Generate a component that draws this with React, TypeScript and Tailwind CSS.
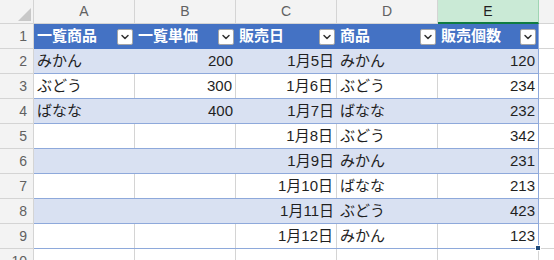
import { ChevronDown } from 'lucide-react';

type Row = { a: string; b: string; c: string; d: string; e: string };

const rows: Row[] = [
  { a: 'みかん', b: '200', c: '1月5日', d: 'みかん', e: '120' },
  { a: 'ぶどう', b: '300', c: '1月6日', d: 'ぶどう', e: '234' },
  { a: 'ばなな', b: '400', c: '1月7日', d: 'ばなな', e: '232' },
  { a: '', b: '', c: '1月8日', d: 'ぶどう', e: '342' },
  { a: '', b: '', c: '1月9日', d: 'みかん', e: '231' },
  { a: '', b: '', c: '1月10日', d: 'ばなな', e: '213' },
  { a: '', b: '', c: '1月11日', d: 'ぶどう', e: '423' },
  { a: '', b: '', c: '1月12日', d: 'みかん', e: '123' },
];

const headers = ['一覧商品', '一覧単価', '販売日', '商品', '販売個数'];
const letters = ['A', 'B', 'C', 'D', 'E'];

function FilterButton() {
  return (
    <div className="w-4 h-4 bg-white border border-[#a6a6a6] rounded-[2px] flex items-center justify-center shrink-0">
      <ChevronDown className="w-3 h-3 text-[#333]" strokeWidth={3} />
    </div>
  );
}

export default function App() {
  return (
    <div
      className="w-[554px] h-[260px] overflow-hidden bg-white text-[15px] text-[#1f1f1f]"
      style={{ fontFamily: '"Liberation Sans", "Noto Sans CJK JP", sans-serif' }}
    >
      {/* column letters */}
      <div className="flex h-6">
        <div className="w-[34px] shrink-0 bg-[#f3f3f3] border-r border-b border-[#d4d4d4] relative">
          <div className="absolute right-[2px] bottom-[2px] w-0 h-0 border-l-[13px] border-l-transparent border-b-[13px] border-b-[#c8c8c8]" />
        </div>
        {letters.map((l) => (
          <div
            key={l}
            className={
              l === 'E'
                ? 'w-[101px] shrink-0 bg-[#caead6] border-r border-[#9fd5b3] border-b-2 border-b-[#107c41] flex items-center justify-center text-[14px] text-[#1f1f1f]'
                : 'w-[101px] shrink-0 bg-[#f3f3f3] border-r border-b border-[#d4d4d4] flex items-center justify-center text-[14px] text-[#616161]'
            }
          >
            {l}
          </div>
        ))}
        <div className="flex-1 bg-[#f3f3f3] border-b border-[#d4d4d4]" />
      </div>

      {/* header row */}
      <div className="flex h-[25px]">
        <div className="w-[34px] shrink-0 bg-[#f3f3f3] border-r border-b border-[#d4d4d4] flex items-center justify-end pr-[6px] text-[14px] text-[#616161]">
          1
        </div>
        <div className="w-[505px] shrink-0 flex bg-[#4472c4] border-r border-[#8ea9db]">
          {headers.map((h) => (
            <div key={h} className="w-[101px] shrink-0 flex items-center justify-between pl-[3px] pr-[2px] last:w-[100px]">
              <span className="text-white font-bold">{h}</span>
              <FilterButton />
            </div>
          ))}
        </div>
        <div className="flex-1 border-b border-[#d4d4d4]" />
      </div>

      {/* data rows */}
      {rows.map((r, i) => {
        const band = i % 2 === 0;
        const cell = band
          ? 'w-[101px] shrink-0 flex items-center px-[3px]'
          : 'w-[101px] shrink-0 flex items-center px-[3px] border-r border-[#d4d4d4]';
        return (
          <div key={i} className="flex h-[25px]">
            <div className="w-[34px] shrink-0 bg-[#f3f3f3] border-r border-b border-[#d4d4d4] flex items-center justify-end pr-[6px] text-[14px] text-[#616161]">
              {i + 2}
            </div>
            <div
              className={`w-[505px] shrink-0 flex border-r border-b border-[#8ea9db] relative ${band ? 'bg-[#d9e1f2]' : 'bg-white'}`}
            >
              <div className={cell}>{r.a}</div>
              <div className={`${cell} justify-end`}>{r.b}</div>
              <div className={`${cell} justify-end`}>{r.c}</div>
              <div className={cell}>{r.d}</div>
              <div className="w-[100px] shrink-0 flex items-center justify-end px-[3px]">{r.e}</div>
              {i === rows.length - 1 && (
                <div className="absolute right-[-3px] bottom-[-3px] w-[6px] h-[6px] bg-[#1e4a7a] border border-white" />
              )}
            </div>
            <div className="flex-1 border-b border-[#d4d4d4]" />
          </div>
        );
      })}

      {/* row 10 */}
      <div className="flex h-[25px]">
        <div className="w-[34px] shrink-0 bg-[#f3f3f3] border-r border-[#d4d4d4] flex items-center justify-end pr-[6px] text-[14px] text-[#616161]">
          10
        </div>
        {letters.map((l) => (
          <div key={l} className="w-[101px] shrink-0 border-r border-[#d4d4d4]" />
        ))}
      </div>
    </div>
  );
}
